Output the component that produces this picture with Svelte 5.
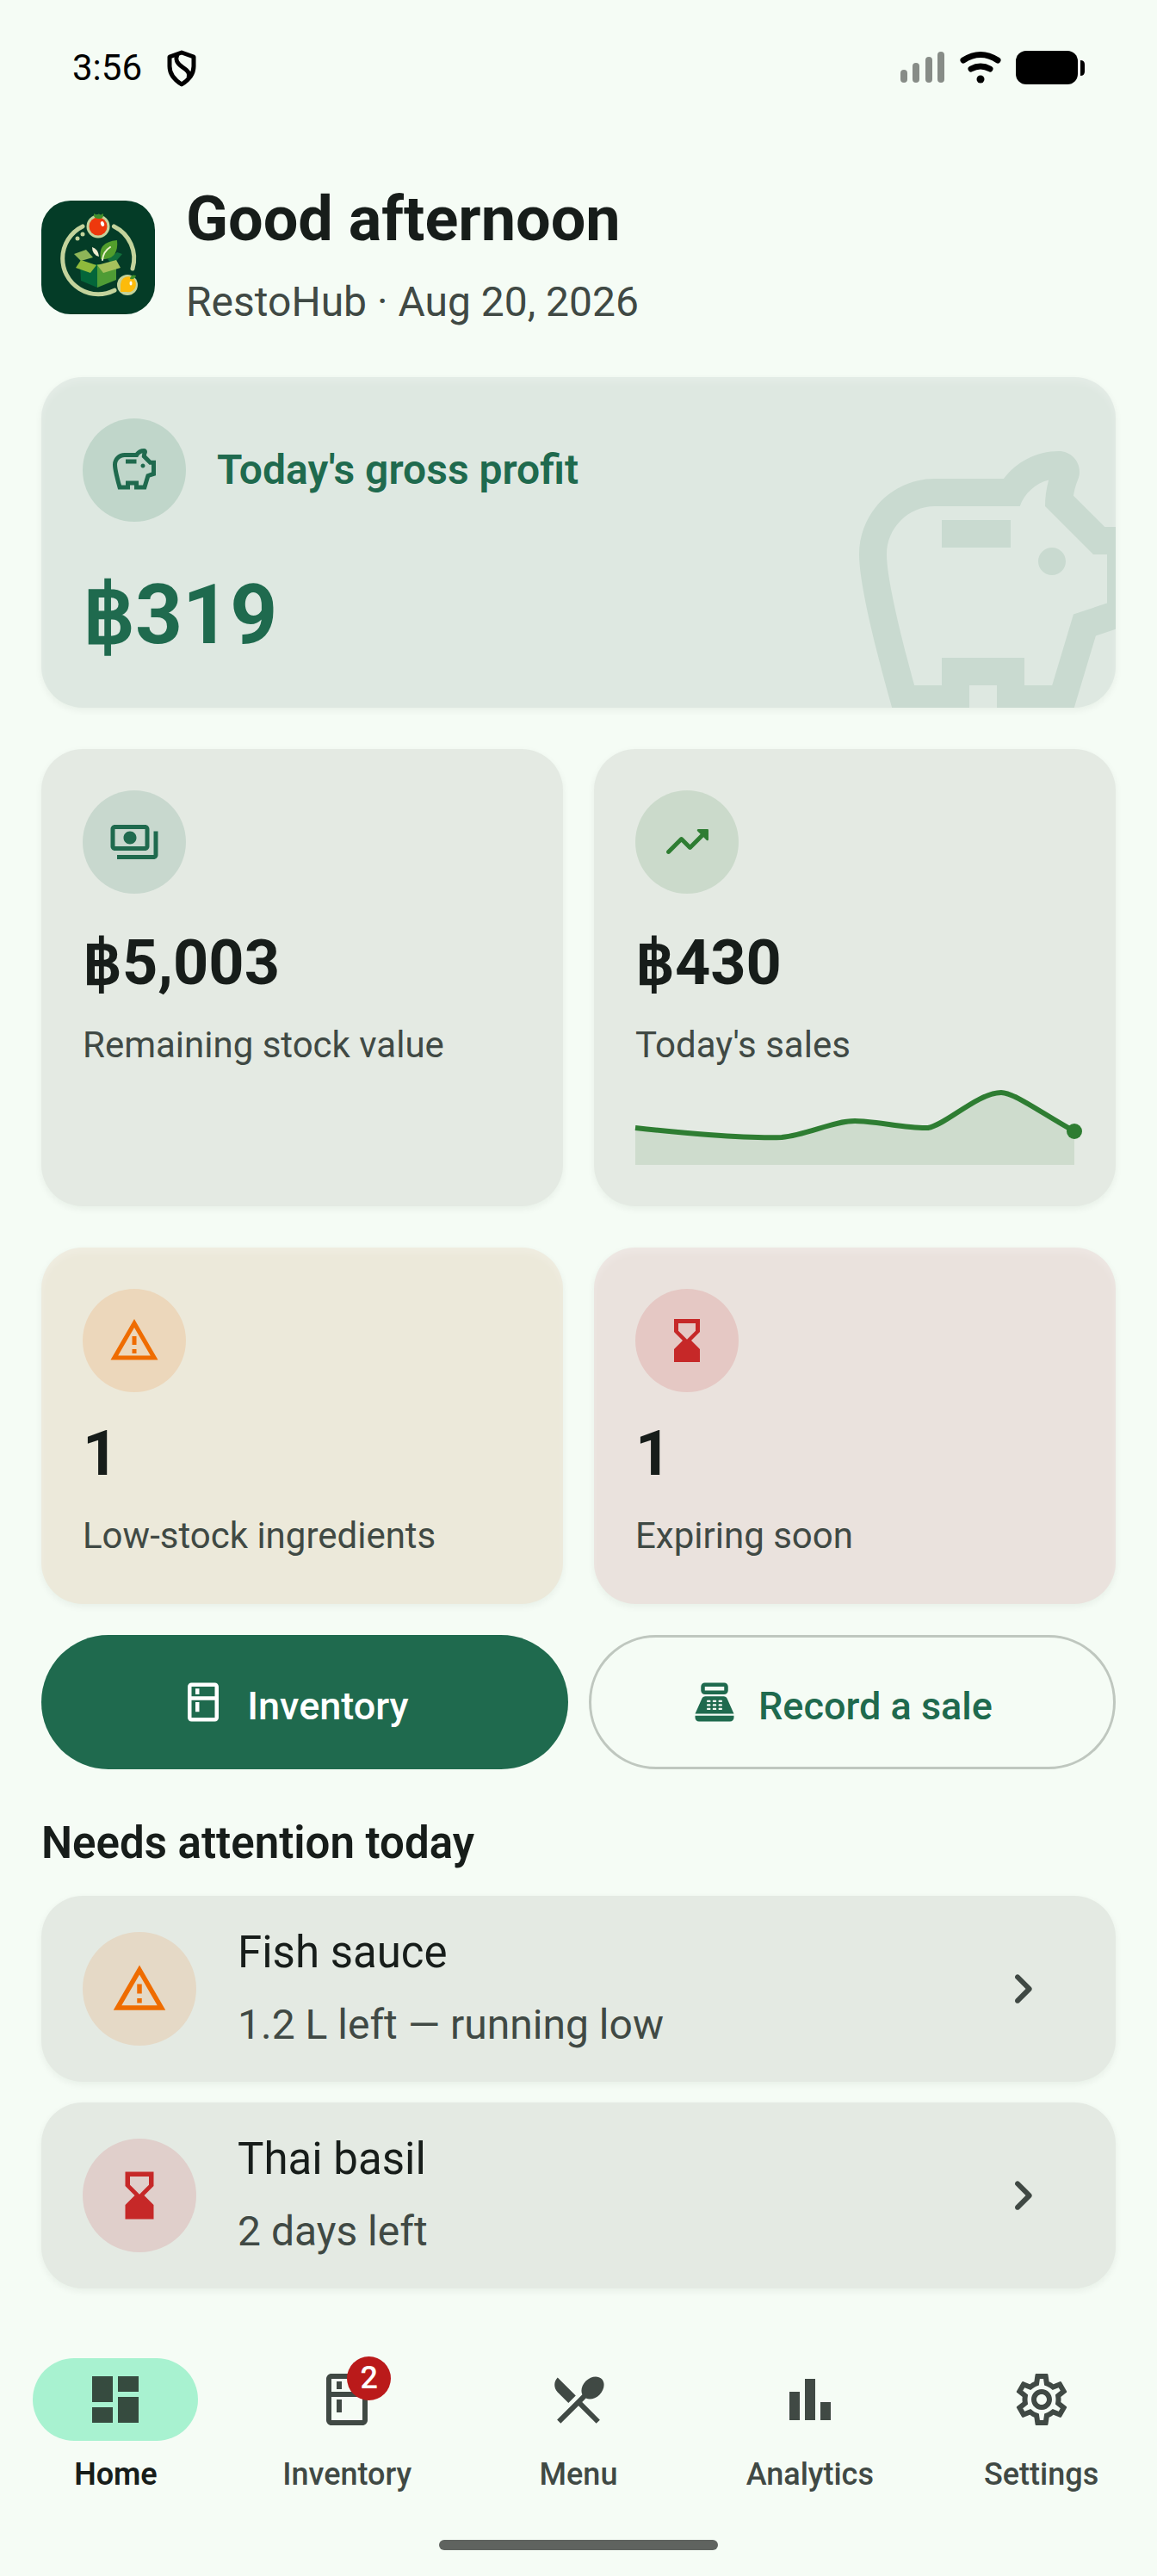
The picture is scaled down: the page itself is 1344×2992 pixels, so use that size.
<script>
  const icons = {
    savings: 'M15 10c0-.55.45-1 1-1s1 .45 1 1-.45 1-1 1-1-.45-1-1zM8 9h5V7H8v2zm14-1.500v6.970l-2.820.940L17.500 21H12v-2h-2v2H4.500S2 12.540 2 9.500 4.460 4 7.500 4h5c.910-1.210 2.360-2 4-2 .830 0 1.500.670 1.500 1.500 0 .210-.040.400-.120.580-.140.340-.260.730-.320 1.150l2.270 2.270H22zm-2 2h-1L15.500 6c0-.650.090-1.290.260-1.910-.970.250-1.760.970-2.090 1.910H7.500C5.570 6 4 7.570 4 9.500c0 1.880 1.220 6.650 2.010 9.500H8v-2h6v2h2.010l1.550-5.150 2.440-.820V9.500z',
    payments: 'M19 14V6c0-1.100-.900-2-2-2H3c-1.100 0-2 .900-2 2v8c0 1.100.900 2 2 2h14c1.100 0 2-.900 2-2zm-2 0H3V6h14v8zm-7-7c-1.660 0-3 1.340-3 3s1.340 3 3 3 3-1.340 3-3-1.340-3-3-3zm13 0v11c0 1.100-.900 2-2 2H4v-2h17V7h2z',
    trend: 'M16.850 6.850l1.440 1.440-4.880 4.880-3.290-3.290c-.390-.390-1.020-.390-1.410 0l-6 6.010c-.390.390-.390 1.020 0 1.410.390.390 1.020.390 1.410 0L9.410 12l3.290 3.290c.390.390 1.020.390 1.410 0l5.590-5.580 1.440 1.440c.310.310.850.090.850-.350V6.500c.010-.280-.210-.500-.490-.500h-4.290c-.450 0-.670.540-.360.850z',
    warning: 'M12 5.990L19.530 19H4.470L12 5.990M12 2L1 21h22L12 2zm1 14h-2v2h2v-2zm0-6h-2v4h2v-4z',
    hourglass: 'M18 22l-.010-6L14 12l3.990-4.010L18 2H6v6l4 4-4 3.990V22h12zM8 7.500V4h8v3.500l-4 4-4-4z',
    kitchen: 'M18 2.010L6 2c-1.100 0-2 .890-2 2v16c0 1.100.900 2 2 2h12c1.100 0 2-.900 2-2V4c0-1.110-.900-1.990-2-1.990zM18 20H6v-9.020h12V20zm0-11H6V4h12v5zM8 5h2v3H8V5zm0 7h2v5H8v-5z',
    till: 'M17 2H7c-1.100 0-2 .900-2 2v2c0 1.100.900 2 2 2h10c1.100 0 2-.900 2-2V4c0-1.100-.900-2-2-2zm0 4H7V4h10v2zm3 16H4c-1.100 0-2-.900-2-2v-1h20v1c0 1.100-.900 2-2 2zm-1.470-11.810C18.210 9.470 17.490 9 16.700 9H7.300c-.790 0-1.510.470-1.830 1.190L2 18h20l-3.470-7.810zM9.500 16h-1c-.280 0-.500-.220-.500-.500s.220-.500.500-.500h1c.280 0 .500.220.500.500s-.220.500-.500.500zm0-2h-1c-.280 0-.500-.220-.500-.500s.220-.500.500-.500h1c.280 0 .500.220.500.500s-.220.500-.500.500zm0-2h-1c-.280 0-.500-.220-.500-.500s.220-.500.500-.500h1c.280 0 .500.220.500.500s-.220.500-.500.500zm3 4h-1c-.280 0-.500-.220-.500-.500s.220-.500.500-.500h1c.280 0 .500.220.500.500s-.220.500-.500.500zm0-2h-1c-.280 0-.500-.220-.500-.500s.220-.500.500-.500h1c.280 0 .500.220.500.500s-.220.500-.500.500zm0-2h-1c-.280 0-.500-.220-.500-.500s.220-.500.500-.500h1c.280 0 .500.220.500.500s-.220.500-.500.500zm3 4h-1c-.280 0-.500-.220-.500-.500s.220-.500.500-.500h1c.280 0 .500.220.500.500s-.220.500-.500.500zm0-2h-1c-.280 0-.500-.220-.500-.500s.220-.500.500-.500h1c.280 0 .500.220.500.500s-.220.500-.500.500zm0-2h-1c-.280 0-.500-.220-.500-.500s.220-.500.500-.500h1c.280 0 .500.220.500.500s-.220.500-.500.500z',
    chevron: 'M9.290 15.880L13.170 12 9.290 8.120c-.390-.390-.390-1.020 0-1.410.390-.390 1.020-.390 1.410 0l4.590 4.590c.390.390.390 1.020 0 1.410L10.700 17.300c-.390.390-1.020.390-1.410 0-.380-.390-.390-1.030 0-1.420z',
    dashboard: 'M3 13h8V3H3v10zm0 8h8v-6H3v6zm10 0h8V11h-8v10zm0-18v6h8V3h-8z',
    menu: 'M8.100 13.340l2.830-2.830L3.910 3.500c-1.560 1.560-1.560 4.090 0 5.660l4.190 4.180zm6.780-1.810c1.530.710 3.680.210 5.270-1.380 1.910-1.910 2.280-4.650.810-6.120-1.460-1.460-4.200-1.100-6.120.810-1.590 1.590-2.090 3.740-1.380 5.270L3.700 19.870l1.410 1.410L12 14.410l6.880 6.880 1.410-1.410L13.410 13l1.470-1.470z',
    chart: 'M4 9h4v11H4zm12 4h4v7h-4zm-6-9h4v16h-4z',
    settings: 'M19.430 12.980c.040-.320.070-.640.070-.980 0-.340-.030-.660-.070-.980l2.110-1.650c.190-.150.240-.420.120-.640l-2-3.460c-.090-.160-.260-.250-.440-.250-.060 0-.120.010-.170.030l-2.490 1c-.520-.400-1.080-.730-1.690-.980l-.380-2.650C14.460 2.180 14.250 2 14 2h-4c-.250 0-.460.180-.490.420l-.380 2.650c-.610.250-1.170.590-1.690.980l-2.490-1c-.060-.020-.120-.030-.180-.030-.170 0-.340.090-.430.250l-2 3.460c-.130.220-.070.490.120.640l2.110 1.650c-.040.320-.070.650-.070.980 0 .330.030.660.070.980l-2.110 1.650c-.190.150-.240.420-.120.640l2 3.460c.090.160.260.250.440.250.060 0 .120-.010.170-.030l2.490-1c.520.400 1.080.730 1.690.980l.380 2.650c.030.240.240.420.490.420h4c.250 0 .460-.180.490-.420l.380-2.650c.610-.250 1.170-.590 1.690-.980l2.490 1c.060.020.120.030.180.030.170 0 .340-.090.430-.250l2-3.460c.120-.220.070-.490-.120-.640l-2.110-1.650zm-1.980-1.710c.040.310.050.520.050.730 0 .210-.020.430-.050.730l-.140 1.130.890.700 1.080.840-.700 1.210-1.270-.510-1.040-.420-.900.680c-.430.320-.840.560-1.250.730l-1.060.430-.160 1.130-.200 1.350h-1.400l-.190-1.350-.160-1.130-1.060-.430c-.430-.180-.830-.410-1.230-.710l-.910-.700-1.060.430-1.270.510-.700-1.210 1.080-.840.890-.700-.140-1.130c-.030-.310-.050-.540-.050-.740s.020-.430.050-.730l.140-1.130-.890-.700-1.080-.840.700-1.210 1.270.510 1.040.420.900-.680c.430-.320.840-.560 1.250-.730l1.060-.430.160-1.130.200-1.350h1.390l.190 1.350.160 1.130 1.060.430c.430.180.830.410 1.230.710l.910.700 1.060-.430 1.270-.510.700 1.210-1.070.850-.890.700.140 1.130zM12 8c-2.210 0-4 1.790-4 4s1.790 4 4 4 4-1.790 4-4-1.790-4-4-4zm0 6c-1.100 0-2-.900-2-2s.900-2 2-2 2 .900 2 2-.900 2-2 2z'
  };

  const salesLine = 'M0 53C28 56 57 59 85 61S145 65 170 64C200 61 230 45 255 45S315 54 340 53C360 50 398 12 425 12C440 12 472 36 510 57';

  const stats = [
    { tone: 'green', icon: 'payments', value: '฿5,003', label: 'Remaining stock value', money: true },
    { tone: 'leaf', icon: 'trend', value: '฿430', label: "Today's sales", money: true, chart: true },
    { tone: 'orange', icon: 'warning', value: '1', label: 'Low-stock ingredients' },
    { tone: 'red', icon: 'hourglass', value: '1', label: 'Expiring soon' }
  ];

  const alerts = [
    { tone: 'orange', icon: 'warning', title: 'Fish sauce', note: '1.2 L left — running low' },
    { tone: 'red', icon: 'hourglass', title: 'Thai basil', note: '2 days left' }
  ];

  const tabs = [
    { icon: 'dashboard', label: 'Home', active: true },
    { icon: 'kitchen', label: 'Inventory', badge: 2 },
    { icon: 'menu', label: 'Menu' },
    { icon: 'chart', label: 'Analytics' },
    { icon: 'settings', label: 'Settings' }
  ];
</script>

{#snippet icon(name)}
  <svg class="icon" viewBox="0 0 24 24" aria-hidden="true"><path d={icons[name]} /></svg>
{/snippet}

<div class="screen">
  <div class="status">
    <div class="status-left">
      <span>3:56</span>
      <svg class="shield" viewBox="0 0 36 42" aria-hidden="true">
        <path d="M18 4 32 9V20C32 29 26 36 18 41 10 36 4 29 4 20V9Z" />
        <path d="M13 6C10 13 13 17 19 21S28 28 26 33" />
      </svg>
    </div>
    <div class="status-right">
      <svg class="signal" viewBox="0 0 52 36" aria-hidden="true">
        <rect x="0" y="21" width="8" height="15" rx="4" /><rect x="14" y="13" width="8" height="23" rx="4" />
        <rect x="29" y="6" width="8" height="30" rx="4" /><rect x="43" y="0" width="8" height="36" rx="4" />
      </svg>
      <svg class="wifi" viewBox="0 0 48 36" aria-hidden="true">
        <path d="M4 10Q24 -3 44 10M13 20Q24 14 35 20" /><circle cx="24" cy="32" r="4.500" />
      </svg>
      <svg class="battery" viewBox="0 0 80 39" aria-hidden="true">
        <rect width="72" height="39" rx="12" /><path d="M75 11q5 0 5 5v8q0 5-5 5z" />
      </svg>
    </div>
  </div>

  <main>
    <header>
      <svg class="logo" viewBox="0 0 132 132" role="img" aria-label="RestoHub logo">
        <rect width="132" height="132" rx="34" fill="#043c27" />
        <path d="M48 29.900A41.500 41.500 0 0 0 24.700 67.200A41.500 41.500 0 0 0 85 104.200M84.400 29.900A41.500 41.500 0 0 1 106 79" fill="none" stroke="#c3d39c" stroke-width="5" stroke-linecap="round" />
        <circle cx="66" cy="30" r="13.500" fill="#c3d39c" />
        <circle cx="66" cy="30" r="10.500" fill="#ee380d" />
        <path d="M61 15l4 2 2-2 1 2 4-2q1 6-5 6-6 0-6-4z" fill="#3f8f2a" />
        <ellipse cx="71" cy="27" rx="2" ry="3" fill="#fff" transform="rotate(-20 71 27)" />
        <circle cx="48" cy="39" r="2.500" fill="#c3d39c" /><circle cx="42" cy="44" r="2.500" fill="#c3d39c" />
        <path d="M45 75 65 74V101L46 93Z" fill="#04663a" />
        <path d="M65 74 87 75V92L65 101Z" fill="#4f9c35" />
        <path d="M38 62 52 57 60 66 46 70Z" fill="#8eb558" />
        <path d="M77 68 88 60 94 62 83 75Z" fill="#12703b" />
        <path d="M46 69 64 75 57 84 40 78Z" fill="#8fb93c" />
        <path d="M65 75 87 69 92 78 72 84Z" fill="#a5c15c" />
        <path d="M59 54Q66 56 67 65 59 63 59 54Z" fill="#f0ecd0" />
        <path d="M69 68Q65 48 88 46 90 66 74 68Z" fill="#529d2c" />
        <path d="M71 69Q72 59 80 54" fill="none" stroke="#eef3cf" stroke-width="2" stroke-linecap="round" />
        <circle cx="100" cy="98" r="12" fill="#c3d39c" />
        <path d="M92 106V97A9 9 0 1 1 99 106Z" fill="#fdbb0b" />
        <path d="M103 91Q104 85 110 87 109 92 103 91Z" fill="#3f8f2a" />
        <ellipse cx="104" cy="96" rx="1.500" ry="2.500" fill="#fff" />
      </svg>
      <div class="greeting">
        <h1>Good afternoon</h1>
        <p>RestoHub · Aug 20, 2026</p>
      </div>
    </header>

    <section class="card hero">
      <div class="hero-head">
        <span class="disc green">{@render icon('savings')}</span>
        <h2>Today's gross profit</h2>
      </div>
      <p class="amount">฿319</p>
      <div class="watermark">{@render icon('savings')}</div>
    </section>

    <div class="stats">
      {#each stats as s}
        <section class="card stat {s.tone}" class:money={s.money}>
          <span class="disc {s.tone}">{@render icon(s.icon)}</span>
          <p class="value">{s.value}</p>
          <p class="label">{s.label}</p>
          {#if s.chart}
            <svg class="spark" viewBox="0 0 510 96" aria-hidden="true">
              <path class="area" d="{salesLine}V96H0Z" />
              <path class="line" d={salesLine} />
              <circle cx="510" cy="57" r="9" />
            </svg>
          {/if}
        </section>
      {/each}
    </div>

    <div class="actions">
      <button class="filled">{@render icon('kitchen')}<span>Inventory</span></button>
      <button class="outlined">{@render icon('till')}<span>Record a sale</span></button>
    </div>

    <h2 class="heading">Needs attention today</h2>
    <div class="alerts">
      {#each alerts as a}
        <button class="card alert">
          <span class="disc large {a.tone}">{@render icon(a.icon)}</span>
          <span class="alert-text">
            <span class="alert-title">{a.title}</span>
            <span class="alert-note">{a.note}</span>
          </span>
          <span class="chevron">{@render icon('chevron')}</span>
        </button>
      {/each}
    </div>
  </main>

  <nav>
    {#each tabs as t}
      <a href="#{t.label.toLowerCase()}" class:active={t.active} aria-current={t.active ? 'page' : undefined}>
        <span class="pill">
          <span class="tab-icon">
            {@render icon(t.icon)}
            {#if t.badge}<span class="badge">{t.badge}</span>{/if}
          </span>
        </span>
        <span>{t.label}</span>
      </a>
    {/each}
  </nav>
  <div class="home-bar"></div>
</div>

<style>
  :global(body) { background: #f5fcf5; }
  .screen { display: flow-root; font-family: Roboto, sans-serif; color: #171d1a; background: #f5fcf5; }
  h1, h2, p { margin: 0; }
  button { font: inherit; color: inherit; border: 0; background: none; cursor: pointer; }
  .icon { display: block; width: 100%; height: 100%; fill: currentColor; }

  .status { display: flex; justify-content: space-between; align-items: center; padding: 54px 84px 0; height: 48px; color: #000; font-size: 42px; }
  .status-left { display: flex; align-items: center; gap: 28px; }
  .shield { width: 36px; height: 42px; overflow: visible; fill: none; stroke: #000; stroke-width: 5; stroke-linejoin: round; }
  .status-right { display: flex; align-items: center; gap: 17px; }
  .signal { width: 52px; height: 36px; fill: #878c87; }
  .wifi { width: 48px; height: 36px; overflow: visible; }
  .wifi path { fill: none; stroke: #000; stroke-width: 7; stroke-linecap: round; }
  .battery { width: 80px; height: 39px; }

  main { padding: 105px 48px 0; }
  header { display: flex; align-items: center; gap: 36px; margin-bottom: 51px; }
  .logo { width: 132px; height: 132px; margin-top: 3px; }
  h1 { font-size: 72px; line-height: 96px; font-weight: 700; }
  .greeting p { margin-top: 12px; font-size: 48px; line-height: 72px; color: #404944; }

  .card { background: #e4eae3; border-radius: 48px; box-shadow: 0 3px 9px rgba(0, 40, 20, .06); }
  .hero { position: relative; overflow: hidden; padding: 48px; background: #dee8e1; color: #1f6a4e; box-shadow: 0 3px 9px rgba(0, 40, 20, .06), inset 0 6px 9px rgba(255, 255, 255, .2); }
  .hero-head { display: flex; align-items: center; gap: 36px; margin-bottom: 48px; }
  .hero h2 { font-size: 48px; line-height: 72px; font-weight: 600; }
  .amount { font-size: 96px; line-height: 120px; font-weight: 700; }
  .watermark { position: absolute; right: -54px; bottom: -54px; width: 384px; height: 384px; color: #c9dad0; }

  .disc { display: block; box-sizing: border-box; flex: none; width: 120px; height: 120px; padding: 30px; border-radius: 50%; }
  .disc.large { width: 132px; height: 132px; padding: 33px; }
  .disc.green { background: #c8d8ce; color: #1f6a4e; }
  .hero .disc.green { background: #c0d6ca; }
  .disc.leaf { background: #cbdacb; color: #2e7d32; }
  .disc.orange { background: #e5d9c6; color: #ef6c00; }
  .disc.red { background: #e0cfcb; color: #c62828; }
  .stat .disc.orange { background: #ecd7bb; }
  .stat .disc.red { background: #e5c8c4; }

  .stats { display: grid; grid-template-columns: 1fr 1fr; gap: 48px 36px; margin-top: 48px; }
  .stat { padding: 48px; }
  .stat.orange { background: #ece9da; box-shadow: 0 3px 9px rgba(0, 40, 20, .06), inset 0 6px 9px rgba(255, 255, 255, .2); }
  .stat.red { background: #eae2dd; box-shadow: 0 3px 9px rgba(0, 40, 20, .06), inset 0 6px 9px rgba(255, 255, 255, .2); }
  .value { margin-top: 24px; font-size: 72px; line-height: 96px; font-weight: 700; }
  .money .value { margin-top: 33px; }
  .label { margin-top: 15px; font-size: 42px; line-height: 63px; color: #404944; }
  .spark { display: block; width: 100%; margin-top: 12px; overflow: visible; fill: #2e7d32; }
  .area { opacity: .12; }
  .line { fill: none; stroke: #2e7d32; stroke-width: 6; }

  .actions { display: grid; grid-template-columns: 1fr 1fr; gap: 24px; margin-top: 36px; }
  .actions button { display: flex; align-items: center; justify-content: center; gap: 24px; height: 156px; padding: 0 72px 0 48px; border-radius: 78px; font-size: 45px; font-weight: 500; }
  .actions :global(.icon) { flex: none; width: 54px; height: 54px; }
  .actions span { padding-top: 8px; }
  .filled { background: #1f6a4e; color: #fff; }
  .actions .outlined { border: 3px solid #bfc7bf; color: #1f6a4e; }

  .heading { margin: 48px 0 24px; font-size: 51px; line-height: 75px; font-weight: 600; }
  .alerts { display: grid; gap: 24px; }
  .alert { display: flex; align-items: center; gap: 48px; width: 100%; padding: 30px 72px 30px 48px; text-align: left; }
  .alert-text { display: grid; flex: 1; gap: 12px; }
  .alert-title { font-size: 51px; line-height: 72px; }
  .alert-note { font-size: 48px; line-height: 72px; color: #404944; }
  .chevron { width: 72px; height: 72px; color: #404944; }

  nav { display: grid; grid-template-columns: repeat(5, 1fr); margin-top: 81px; }
  nav a { display: grid; justify-items: center; gap: 15px; color: #404944; font-size: 36px; line-height: 48px; font-weight: 500; text-decoration: none; }
  nav a.active { color: #171d1a; font-weight: 600; }
  .pill { display: grid; place-items: center; width: 192px; height: 96px; border-radius: 48px; }
  .active .pill { background: #a8f2d0; color: #364b3f; }
  .tab-icon { position: relative; width: 72px; height: 72px; }
  .badge { position: absolute; left: 36px; top: -14px; min-width: 51px; border-radius: 26px; background: #ba1a1a; color: #fff; font-size: 36px; line-height: 51px; text-align: center; }
  .home-bar { width: 324px; height: 12px; margin: 52px auto 30px; border-radius: 6px; background: #5f635f; }
</style>
